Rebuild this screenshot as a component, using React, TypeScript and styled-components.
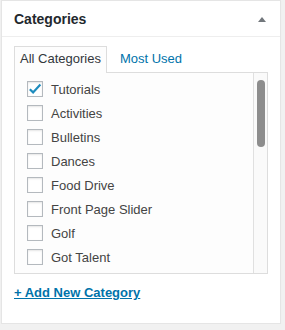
import React, { useState } from "react";
import styled, { createGlobalStyle } from "styled-components";

const GlobalStyle = createGlobalStyle`
  html, body {
    margin: 0;
    padding: 0;
    background: #f1f1f1;
    font-family: "Liberation Sans", Arial, sans-serif;
    font-size: 13px;
    color: #444;
  }
`;

const Postbox = styled.div`
  box-sizing: border-box;
  width: 280px;
  height: 324px;
  margin-left: 1px;
  background: #fff;
  border: 1px solid #e5e5e5;
  box-shadow: 0 1px 1px rgba(0, 0, 0, 0.04);
`;

const Header = styled.div`
  display: flex;
  align-items: center;
  justify-content: space-between;
  height: 35px;
  padding: 0 14px 0 12px;
  border-bottom: 1px solid #eee;
`;

const Title = styled.h2`
  margin: 0;
  padding-top: 1px;
  font-size: 14px;
  font-weight: bold;
  color: #23282d;
`;

const Toggle = styled.span`
  width: 0;
  height: 0;
  margin-top: 1px;
  border-left: 4px solid transparent;
  border-right: 4px solid transparent;
  border-bottom: 5px solid #72777c;
`;

const Inside = styled.div`
  padding: 9px 12px 0;
`;

const Tabs = styled.ul`
  display: flex;
  align-items: flex-end;
  margin: 0;
  padding: 0;
  list-style: none;
`;

const Tab = styled.li<{ $active?: boolean }>`
  box-sizing: border-box;
  height: 27px;
  line-height: 24px;
  padding: 0 5px;
  margin-right: 7px;
  margin-bottom: -1px;
  border: 1px solid ${(p) => (p.$active ? "#ddd" : "transparent")};
  border-bottom: none;
  background: ${(p) => (p.$active ? "#fdfdfd" : "transparent")};
  color: ${(p) => (p.$active ? "#32373c" : "#0073aa")};
  position: relative;
  z-index: 1;
  cursor: pointer;
`;

const TabsPanel = styled.div`
  box-sizing: border-box;
  display: flex;
  width: 254px;
  height: 202px;
  border: 1px solid #ddd;
  background: #fdfdfd;
`;

const ListArea = styled.div`
  flex: 1;
  overflow: hidden;
`;

const ScrollTrack = styled.div`
  box-sizing: border-box;
  width: 14px;
  padding: 7px 0 0 3px;
  border-left: 1px solid #e0e0e0;
  background: #fafafa;
`;

const Thumb = styled.div`
  width: 8px;
  height: 67px;
  border-radius: 4px;
  background: #8d8d8d;
`;

const Checklist = styled.ul`
  margin: 0;
  padding: 4px 0 0 12px;
  list-style: none;
`;

const Item = styled.li`
  display: flex;
  align-items: center;
  height: 24px;
`;

const Label = styled.label`
  display: flex;
  align-items: center;
  gap: 8px;
  color: #444;
  cursor: pointer;
`;

const Box = styled.span`
  box-sizing: border-box;
  display: flex;
  align-items: center;
  justify-content: center;
  width: 16px;
  height: 16px;
  border: 1px solid #b4b9be;
  background: #fff;
  box-shadow: inset 0 1px 2px rgba(0, 0, 0, 0.1);
`;

const AddLink = styled.a`
  display: inline-block;
  margin-top: 11px;
  font-weight: bold;
  color: #0073aa;
  text-decoration: underline;
  cursor: pointer;
`;

const categories = [
  "Tutorials",
  "Activities",
  "Bulletins",
  "Dances",
  "Food Drive",
  "Front Page Slider",
  "Golf",
  "Got Talent",
];

const Check = () => (
  <svg width="14" height="14" viewBox="0 0 14 14">
    <path d="M1.8 7.3 L5.1 10.4 L12.4 2.6" fill="none" stroke="#1e8cbe" strokeWidth="2.2" />
  </svg>
);

export default function App() {
  const [checked, setChecked] = useState<string[]>(["Tutorials"]);
  const toggle = (name: string) =>
    setChecked((c) => (c.includes(name) ? c.filter((n) => n !== name) : [...c, name]));

  return (
    <>
      <GlobalStyle />
      <Postbox>
        <Header>
          <Title>Categories</Title>
          <Toggle />
        </Header>
        <Inside>
          <Tabs>
            <Tab $active>All Categories</Tab>
            <Tab>Most Used</Tab>
          </Tabs>
          <TabsPanel>
            <ListArea>
              <Checklist>
                {categories.map((name) => (
                  <Item key={name}>
                    <Label onClick={() => toggle(name)}>
                      <Box>{checked.includes(name) && <Check />}</Box>
                      {name}
                    </Label>
                  </Item>
                ))}
              </Checklist>
            </ListArea>
            <ScrollTrack>
              <Thumb />
            </ScrollTrack>
          </TabsPanel>
          <AddLink>+ Add New Category</AddLink>
        </Inside>
      </Postbox>
    </>
  );
}
